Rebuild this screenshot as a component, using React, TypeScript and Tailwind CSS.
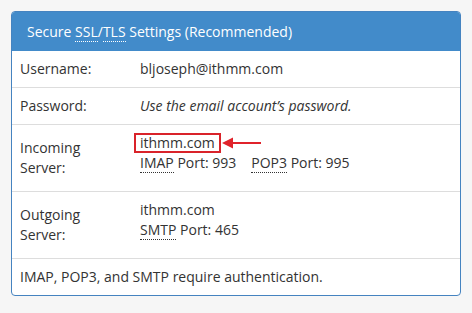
import React from "react";

const Abbr = ({ children, light }: { children: React.ReactNode; light?: boolean }) => (
  <span
    className={
      "border-b border-dotted " + (light ? "border-white" : "border-[#333]")
    }
  >
    {children}
  </span>
);

export default function App() {
  return (
    <div
      className="min-h-screen bg-[#f6f6f6] p-[11px] text-[14px] leading-5 text-[#333]"
      style={{ fontFamily: '"Open Sans", "Liberation Sans", sans-serif' }}
    >
      <div className="overflow-hidden rounded-[4px] border border-[#4583c0] bg-white">
        <div className="flex h-[39px] items-center bg-[#428bca] px-[15px] text-white">
          <span>
            Secure <Abbr light>SSL</Abbr>/<Abbr light>TLS</Abbr> Settings (Recommended)
          </span>
        </div>

        <div className="flex border-b border-[#dddddd]">
          <div className="w-[120px] shrink-0 self-center px-2 py-2">Username:</div>
          <div className="flex-1 px-2 py-2">bljoseph@ithmm.com</div>
        </div>

        <div className="flex border-b border-[#dddddd]">
          <div className="w-[120px] shrink-0 self-center px-2 py-2">Password:</div>
          <div className="flex-1 px-2 py-2 italic">Use the email account’s password.</div>
        </div>

        <div className="flex border-b border-[#dddddd]">
          <div className="w-[120px] shrink-0 self-center px-2 py-2">
            Incoming
            <br />
            Server:
          </div>
          <div className="flex-1 px-2 pt-2 pb-[18px]">
            <div className="relative">
              <span>ithmm.com</span>
              <div className="absolute left-[-6px] top-0 h-[20px] w-[87px] border-2 border-[#d9232a]" />
              <svg
                className="absolute left-[82px] top-[4px]"
                width="40"
                height="12"
                viewBox="0 0 40 12"
              >
                <polygon points="0,6 11,0.5 11,11.5" fill="#e0232b" />
                <rect x="10" y="5" width="29" height="2" fill="#e0232b" />
              </svg>
            </div>
            <div>
              <Abbr>IMAP</Abbr> Port: 993
              <span className="ml-[15px]">
                <Abbr>POP3</Abbr> Port: 995
              </span>
            </div>
          </div>
        </div>

        <div className="flex border-b border-[#dddddd]">
          <div className="w-[120px] shrink-0 self-center px-2 py-2">
            Outgoing
            <br />
            Server:
          </div>
          <div className="flex-1 px-2 pt-2 pb-[18px]">
            <div>ithmm.com</div>
            <div>
              <Abbr>SMTP</Abbr> Port: 465
            </div>
          </div>
        </div>

        <div className="px-2 py-2">IMAP, POP3, and SMTP require authentication.</div>
      </div>
    </div>
  );
}
